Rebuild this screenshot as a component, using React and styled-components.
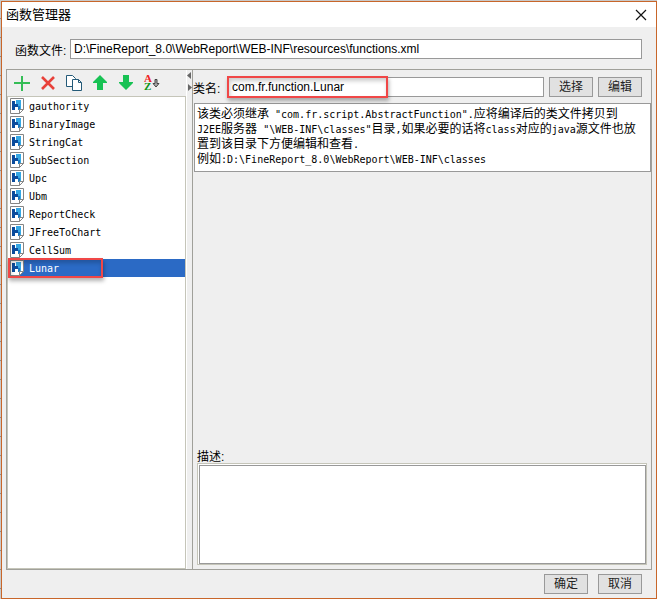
import React, { useState } from 'react'
import styled, { createGlobalStyle, css } from 'styled-components'

const GlobalStyle = createGlobalStyle`
  *, *::before, *::after {
    box-sizing: border-box;
  }
  html, body, #root {
    height: 100%;
    margin: 0;
  }
  body, button, input, textarea {
    font-family: "Liberation Sans", "Noto Sans CJK SC", sans-serif;
    font-size: 12px;
    color: #000;
  }
`

const Desktop = styled.div`
  min-height: 100%;
  display: flex;
  padding: 1px 0 0 1px;
  background: repeating-linear-gradient(#c9c9c9 0 18px, #8c8c8c 18px 19px);
`

const Dialog = styled.div`
  flex: 1;
  min-width: 0;
  display: flex;
  flex-direction: column;
  border: 1px solid #c8662a;
  background: #efefef;
`

const TitleBar = styled.header`
  height: 25px;
  display: flex;
  justify-content: space-between;
  align-items: center;
  padding: 0 9px 0 4px;
  background: #fff;
  h1 {
    margin: 0;
    font-size: 13px;
    line-height: 20px;
    font-weight: normal;
  }
`

const CloseButton = styled.button`
  display: flex;
  padding: 0;
  border: none;
  background: none;
`

const FileRow = styled.div`
  display: flex;
  align-items: center;
  padding: 12px 14px 10px 13px;
  label {
    width: 55px;
    white-space: nowrap;
  }
`

const TextInput = styled.input`
  flex: 1;
  min-width: 0;
  height: 20px;
  padding: 0 3px;
  border: 1px solid #999;
  border-radius: 0;
  outline: none;
  background: #fff;
`

const Button = styled.button`
  width: 44px;
  height: 20px;
  padding: 0;
  border: 1px solid #999;
  background: #e1e1e1;
  color: #222;
  line-height: 18px;
`

const Panel = styled.main`
  flex: 1;
  display: grid;
  grid-template-columns: 180px 5px 1fr;
  margin: 0 4px;
  border: 1px solid #a0a09a;
`

const Side = styled.div`
  display: flex;
  flex-direction: column;
  border-right: 1px solid #fff;
`

const ToolBar = styled.div`
  height: 26px;
  display: flex;
  align-items: center;
  padding: 0 2px;
`

const ToolButton = styled.button`
  width: 26px;
  height: 24px;
  display: flex;
  justify-content: center;
  align-items: center;
  padding: 0;
  border: none;
  background: none;
  svg {
    overflow: visible;
  }
`

const List = styled.ul`
  flex: 1;
  margin: 0;
  padding: 0;
  list-style: none;
  border: 1px solid #c5c5b9;
  background: #fff;
`

const Item = styled.li`
  position: relative;
  button {
    width: 100%;
    height: 18px;
    display: flex;
    align-items: center;
    gap: 5px;
    padding: 0 2px;
    border: none;
    background: ${props => props.$selected ? '#2b6ac5' : 'transparent'};
    color: ${props => props.$selected ? '#fff' : '#000'};
    font-family: "DejaVu Sans Mono", monospace;
    font-size: 10px;
    text-align: left;
  }
`

const highlight = css`
  content: '';
  position: absolute;
  border: 2px solid #f04747;
  box-shadow: 1px 3px 4px rgba(0, 0, 0, 0.3), inset 1px 3px 4px rgba(0, 0, 0, 0.2);
  pointer-events: none;
`

const MarkedItem = styled(Item)`
  &::after {
    ${highlight}
    top: -1px;
    left: 0;
    width: 95px;
    height: 20px;
  }
`

const Splitter = styled.div`
  display: flex;
  flex-direction: column;
  gap: 5px;
  padding-top: 2px;
`

const Detail = styled.div`
  min-width: 0;
  display: flex;
  flex-direction: column;
  border-left: 1px solid #a0a09a;
`

const ClassRow = styled.div`
  display: flex;
  align-items: center;
  gap: 5px;
  padding: 7px 9px 6px 0;
  label {
    width: 30px;
    white-space: nowrap;
  }
`

const ClassField = styled.div`
  flex: 1;
  min-width: 0;
  display: flex;
  position: relative;
  &::after {
    ${highlight}
    top: -1px;
    left: -1px;
    width: 161px;
    height: 22px;
  }
`

const Hint = styled.p`
  margin: 0 0 0 1px;
  padding: 3px 2px 4px;
  border: 1px solid #999;
  background: #fff;
  font-size: 12px;
  line-height: 15px;
  white-space: nowrap;
  span {
    font-family: "DejaVu Sans Mono", monospace;
    font-size: 10px;
    line-height: 0;
  }
`

const Description = styled.div`
  display: flex;
  flex-direction: column;
  margin-top: auto;
  margin-bottom: 4px;
  padding: 0 4px;
  label {
    line-height: 12px;
  }
`

const AreaFrame = styled.div`
  display: flex;
  padding: 1px 0 0 1px;
  border: 1px solid #c5c5b9;
  background: #fff;
  textarea {
    flex: 1;
    min-width: 0;
    height: 99px;
    border: 1px solid #999;
    border-radius: 0;
    outline: none;
    resize: none;
  }
`

const Footer = styled.footer`
  display: flex;
  justify-content: flex-end;
  gap: 10px;
  padding: 4px 14px;
`

const ItemIcon = () => (
  <svg width="14" height="16" viewBox="0 0 14 16">
    <path d="M.5.5h13v11l-4 4h-9z" fill="#fff" stroke="#858585" />
    <path d="M6 2h5v10H8V7H6z" fill="#35a7e4" />
    <path d="M2 3h3v3h3v3H5v3H2z" fill="#0b4b9c" />
    <path d="M8 8h2v4H8z" fill="#1779c4" />
    <path d="M9.500 15.500v-4h4z" fill="#fff" stroke="#858585" />
  </svg>
)

const tools = [
  { label: '添加', icon: <path d="M8 1v15M0 8h16" stroke="#35bd56" strokeWidth="2" /> },
  { label: '删除', icon: <path d="M2 2l12 12M14 2L2 14" stroke="#e8413a" strokeWidth="2.600" /> },
  {
    label: '复制',
    icon: (
      <g fill="#fff" stroke="#245a78">
        <path d="M.5.5h6l3 3v8h-9z" />
        <path d="M6.500 4.500h6l3 3v8h-9z" />
        <path d="M12.500 4.500v3h3" fill="none" />
      </g>
    ),
  },
  { label: '上移', icon: <path d="M8 0l7 7v1h-4v7H5V8H1V7z" fill="#18c254" /> },
  { label: '下移', icon: <path d="M5 0h6v7h4v1l-7 7-7-7V7h4z" fill="#18c254" /> },
  {
    label: '排序',
    icon: (
      <g>
        <text x="0" y="7" fontFamily="Liberation Serif" fontSize="11" fontWeight="bold" fill="#f02222">A</text>
        <text x="0" y="15" fontFamily="Liberation Serif" fontSize="11" fontWeight="bold" fill="#109618">Z</text>
        <path d="M11 4.500h2v4h2l-3 3.500-3-3.500h2z" fill="#aaa" stroke="#444" />
      </g>
    ),
  },
]

const functions = [
  'gauthority', 'BinaryImage', 'StringCat', 'SubSection', 'Upc',
  'Ubm', 'ReportCheck', 'JFreeToChart', 'CellSum', 'Lunar',
]

function App() {
  const [selected, setSelected] = useState('Lunar')

  return (
    <Desktop>
      <GlobalStyle />
      <Dialog>
        <TitleBar>
          <h1>函数管理器</h1>
          <CloseButton aria-label="关闭">
            <svg width="12" height="12" viewBox="0 0 12 12">
              <path d="M1 1l10 10M11 1L1 11" stroke="#111" strokeWidth="1.200" />
            </svg>
          </CloseButton>
        </TitleBar>

        <FileRow>
          <label htmlFor="file">函数文件:</label>
          <TextInput id="file" defaultValue="D:\FineReport_8.0\WebReport\WEB-INF\resources\functions.xml" />
        </FileRow>

        <Panel>
          <Side>
            <ToolBar>
              {tools.map(tool => (
                <ToolButton key={tool.label} aria-label={tool.label}>
                  <svg width="16" height="16" viewBox="0 0 16 16" fill="none">{tool.icon}</svg>
                </ToolButton>
              ))}
            </ToolBar>
            <List>
              {functions.map(name => {
                const Row = name === 'Lunar' ? MarkedItem : Item
                return (
                  <Row key={name} $selected={name === selected}>
                    <button onClick={() => setSelected(name)}>
                      <ItemIcon />
                      {name}
                    </button>
                  </Row>
                )
              })}
            </List>
          </Side>

          <Splitter>
            <svg width="5" height="7" viewBox="0 0 5 7"><path d="M4 0v7L0 3.500z" fill="#666" /></svg>
            <svg width="5" height="7" viewBox="0 0 5 7"><path d="M1 0v7l4-3.500z" fill="#666" /></svg>
          </Splitter>

          <Detail>
            <ClassRow>
              <label htmlFor="class">类名:</label>
              <ClassField>
                <TextInput id="class" defaultValue="com.fr.function.Lunar" />
              </ClassField>
              <Button>选择</Button>
              <Button>编辑</Button>
            </ClassRow>
            <Hint>
              该类必须继承<span> "com.fr.script.AbstractFunction".</span>应将编译后的类文件拷贝到<br />
              <span>J2EE</span>服务器<span> "\WEB-INF\classes"</span>目录<span>,</span>如果必要的话将<span>class</span>对应的<span>java</span>源文件也放<br />
              置到该目录下方便编辑和查看<span>.</span><br />
              例如<span>:D:\FineReport_8.0\WebReport\WEB-INF\classes</span>
            </Hint>
            <Description>
              <label htmlFor="description">描述:</label>
              <AreaFrame>
                <textarea id="description" />
              </AreaFrame>
            </Description>
          </Detail>
        </Panel>

        <Footer>
          <Button>确定</Button>
          <Button>取消</Button>
        </Footer>
      </Dialog>
    </Desktop>
  )
}

export default App
